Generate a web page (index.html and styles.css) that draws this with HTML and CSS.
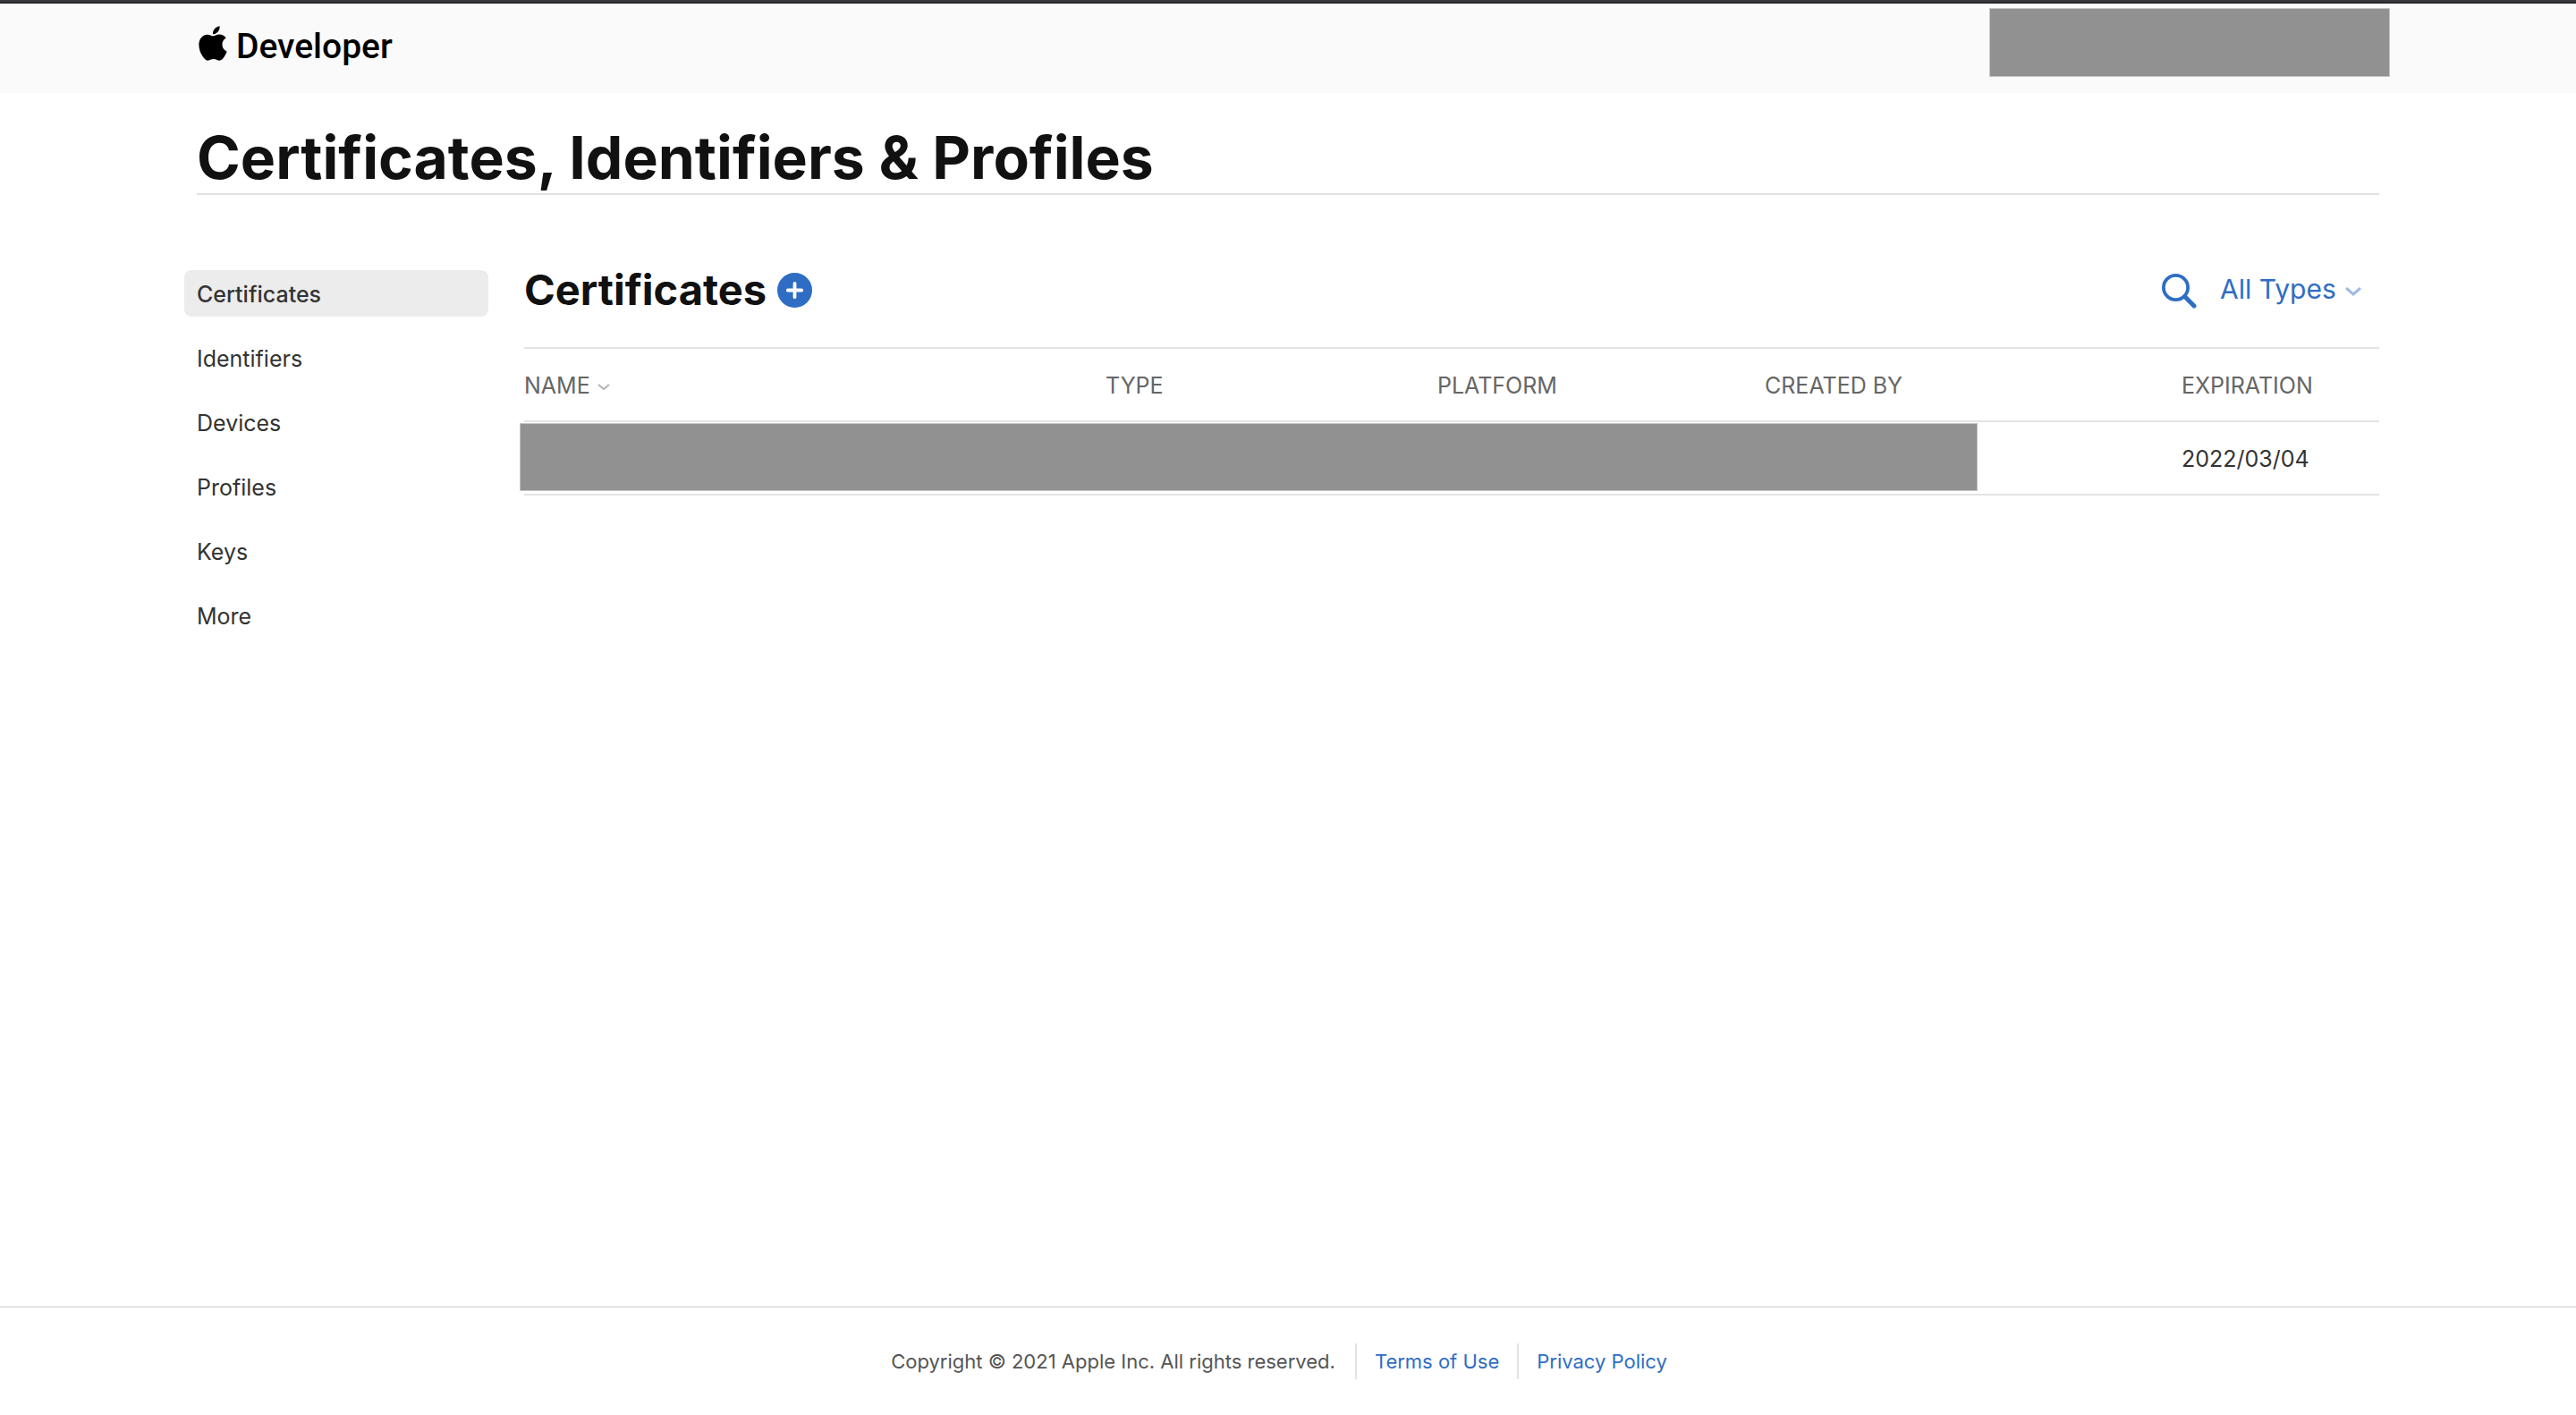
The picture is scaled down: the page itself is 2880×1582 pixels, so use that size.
FILE: index.html
```html
<!DOCTYPE html>
<html lang="en">
<head>
    <meta charset="utf-8">
    <title>Certificates, Identifiers &amp; Profiles</title>
    <link rel="stylesheet" href="styles.css">
</head>
<body>
    <header class="topbar">
        <a class="logo" href="#">
            <svg class="apple" viewBox="2 0 20 24" aria-hidden="true">
                <path d="M12.152 6.896c-.948 0-2.415-1.078-3.96-1.04-2.04.027-3.91 1.183-4.961 3.014-2.117 3.675-.546 9.103 1.519 12.09 1.013 1.454 2.208 3.09 3.792 3.039 1.52-.065 2.09-.987 3.935-.987 1.831 0 2.35.987 3.96.948 1.637-.026 2.676-1.48 3.676-2.948 1.156-1.688 1.636-3.325 1.662-3.415-.039-.013-3.182-1.221-3.22-4.857-.026-3.04 2.48-4.494 2.597-4.559-1.429-2.09-3.623-2.324-4.39-2.376-2-.156-3.675 1.09-4.61 1.09zM15.53 3.83c.843-1.012 1.4-2.427 1.245-3.83-1.207.052-2.662.805-3.532 1.818-.78.896-1.454 2.338-1.273 3.714 1.338.104 2.715-.688 3.559-1.701"/>
            </svg>
            <span>Developer</span>
        </a>
        <div class="hidden-block account"></div>
    </header>

    <div class="page">
        <h1>Certificates, Identifiers &amp; Profiles</h1>
        <div class="content">
            <nav class="sidebar">
                <a class="active" href="#">Certificates</a>
                <a href="#">Identifiers</a>
                <a href="#">Devices</a>
                <a href="#">Profiles</a>
                <a href="#">Keys</a>
                <a href="#">More</a>
            </nav>
            <main>
                <div class="toolbar">
                    <h2>Certificates</h2>
                    <button class="add" aria-label="Add certificate">
                        <svg viewBox="0 0 39 39">
                            <circle cx="19.500" cy="19.500" r="19.500" fill="#2f6dc4"/>
                            <path d="M11.800 19.500h15.400M19.500 11.800v15.400" stroke="#fff" stroke-width="3.800" stroke-linecap="round"/>
                        </svg>
                    </button>
                    <button class="search" aria-label="Search">
                        <svg viewBox="0 0 39 39" fill="none" stroke="#2f6dc4">
                            <circle cx="15.500" cy="15.500" r="13.600" stroke-width="3.800"/>
                            <path d="M25.500 25.500l10.500 10.500" stroke-width="5" stroke-linecap="round"/>
                        </svg>
                    </button>
                    <div class="filter">
                        <select aria-label="Certificate type">
                            <option>All Types</option>
                        </select>
                        <svg class="arrow" viewBox="0 0 18 10"><path d="M1 1l8 7 8-7"/></svg>
                    </div>
                </div>
                <table>
                    <colgroup>
                        <col class="col-name">
                        <col class="col-type">
                        <col class="col-platform">
                        <col class="col-created">
                        <col class="col-expiration">
                    </colgroup>
                    <thead>
                        <tr>
                            <th>
                                <button class="sort">NAME
                                    <svg viewBox="0 0 14 8"><path d="M1 1l6 5 6-5"/></svg>
                                </button>
                            </th>
                            <th>TYPE</th>
                            <th>PLATFORM</th>
                            <th>CREATED BY</th>
                            <th>EXPIRATION</th>
                        </tr>
                    </thead>
                    <tbody>
                        <tr>
                            <td class="covered" colspan="4"><div class="hidden-block"></div></td>
                            <td>2022/03/04</td>
                        </tr>
                    </tbody>
                </table>
            </main>
        </div>
    </div>

    <footer>
        <span>Copyright © 2021 Apple Inc. All rights reserved.</span>
        <a href="#">Terms of Use</a>
        <a href="#">Privacy Policy</a>
    </footer>
</body>
</html>
```
FILE: styles.css
```css
* {
    box-sizing: border-box;
}
body {
    margin: 0;
    min-height: 100vh;
    display: flex;
    flex-direction: column;
    font-family: Inter, "Liberation Sans", sans-serif;
    font-size: 25px;
    color: #333;
    background: #fff;
}
a {
    color: #2f6dc4;
    text-decoration: none;
}
button, select {
    font: inherit;
    color: inherit;
    background: none;
    border: none;
    padding: 0;
    cursor: pointer;
}
svg {
    display: block;
}

.topbar {
    height: 104px;
    padding: 0 208px 0 222px;
    display: flex;
    justify-content: space-between;
    background: #fafafa;
    border-top: 2px solid #39363f;
    box-shadow: inset 0 2px #28262c;
}
.logo {
    display: flex;
    align-items: center;
    gap: 10px;
    height: 100px;
    color: #000;
    font-family: Roboto, "Liberation Sans", sans-serif;
    font-size: 39px;
    font-weight: 500;
}
.apple {
    width: 32px;
    height: 39px;
    margin-bottom: 8px;
}
.hidden-block {
    background: #919191;
    border: 1px solid #c4c4c4;
}
.account {
    width: 448px;
    height: 77px;
    margin-top: 7px;
}

.page {
    flex: 1;
    padding: 32px 220px 0;
}
h1 {
    margin: 0;
    font-size: 66px;
    line-height: 80px;
    font-weight: 700;
    color: #111;
    border-bottom: 2px solid #e3e3e3;
}
.content {
    display: flex;
    margin-top: 84px;
}
.sidebar {
    width: 340px;
    margin: 0 40px 0 -14px;
    display: flex;
    flex-direction: column;
    gap: 20px;
}
.sidebar a {
    padding: 2px 14px 0;
    line-height: 50px;
    border-radius: 8px;
    color: #333;
}
.sidebar .active {
    background: #ececec;
    font-weight: 500;
}

main {
    flex: 1;
}
.toolbar {
    height: 44px;
    margin-bottom: 42px;
    display: flex;
    align-items: center;
}
h2 {
    margin: 0;
    font-size: 47px;
    line-height: 44px;
    font-weight: 700;
    color: #111;
}
.add {
    width: 39px;
    margin-left: 12px;
}
.search {
    width: 39px;
    margin: 2px 0 0 auto;
}
.filter {
    display: flex;
    align-items: center;
    margin: 0 20px 0 26px;
    gap: 10px;
    font-size: 30px;
    color: #2f6dc4;
}
.filter select {
    appearance: none;
    padding-bottom: 2px;
}
.arrow {
    width: 18px;
    height: 10px;
    margin-top: 4px;
}
.arrow path, .sort path {
    fill: none;
    stroke: #9dbbe4;
    stroke-width: 3;
}

table {
    width: 100%;
    table-layout: fixed;
    border-collapse: separate;
    border-spacing: 0;
    border-top: 2px solid #e3e3e3;
}
.col-name {
    width: 650px;
}
.col-type {
    width: 371px;
}
.col-platform {
    width: 366px;
}
.col-created {
    width: 466px;
}
th, td {
    height: 82px;
    padding: 2px 0 0;
    text-align: left;
    border-bottom: 2px solid #e3e3e3;
}
th {
    font-weight: 400;
    color: #666;
}
.sort {
    display: flex;
    align-items: center;
    gap: 8px;
}
.sort svg {
    width: 14px;
    height: 8px;
    margin-top: 4px;
}
.sort path {
    stroke: #b3b3b3;
    stroke-width: 2;
}
.covered {
    padding-top: 1px;
    vertical-align: top;
}
/* sticks out a little past the left edge of the table */
.covered .hidden-block {
    height: 76px;
    margin: 0 228px 0 -5px;
}

footer {
    border-top: 2px solid #e3e3e3;
    padding: 40px 0;
    display: flex;
    justify-content: center;
    font-size: 22px;
    line-height: 40px;
}
footer span {
    color: #555;
    padding-right: 22px;
}
footer a {
    padding: 0 20px;
    border-left: 2px solid #e3e3e3;
}
```
